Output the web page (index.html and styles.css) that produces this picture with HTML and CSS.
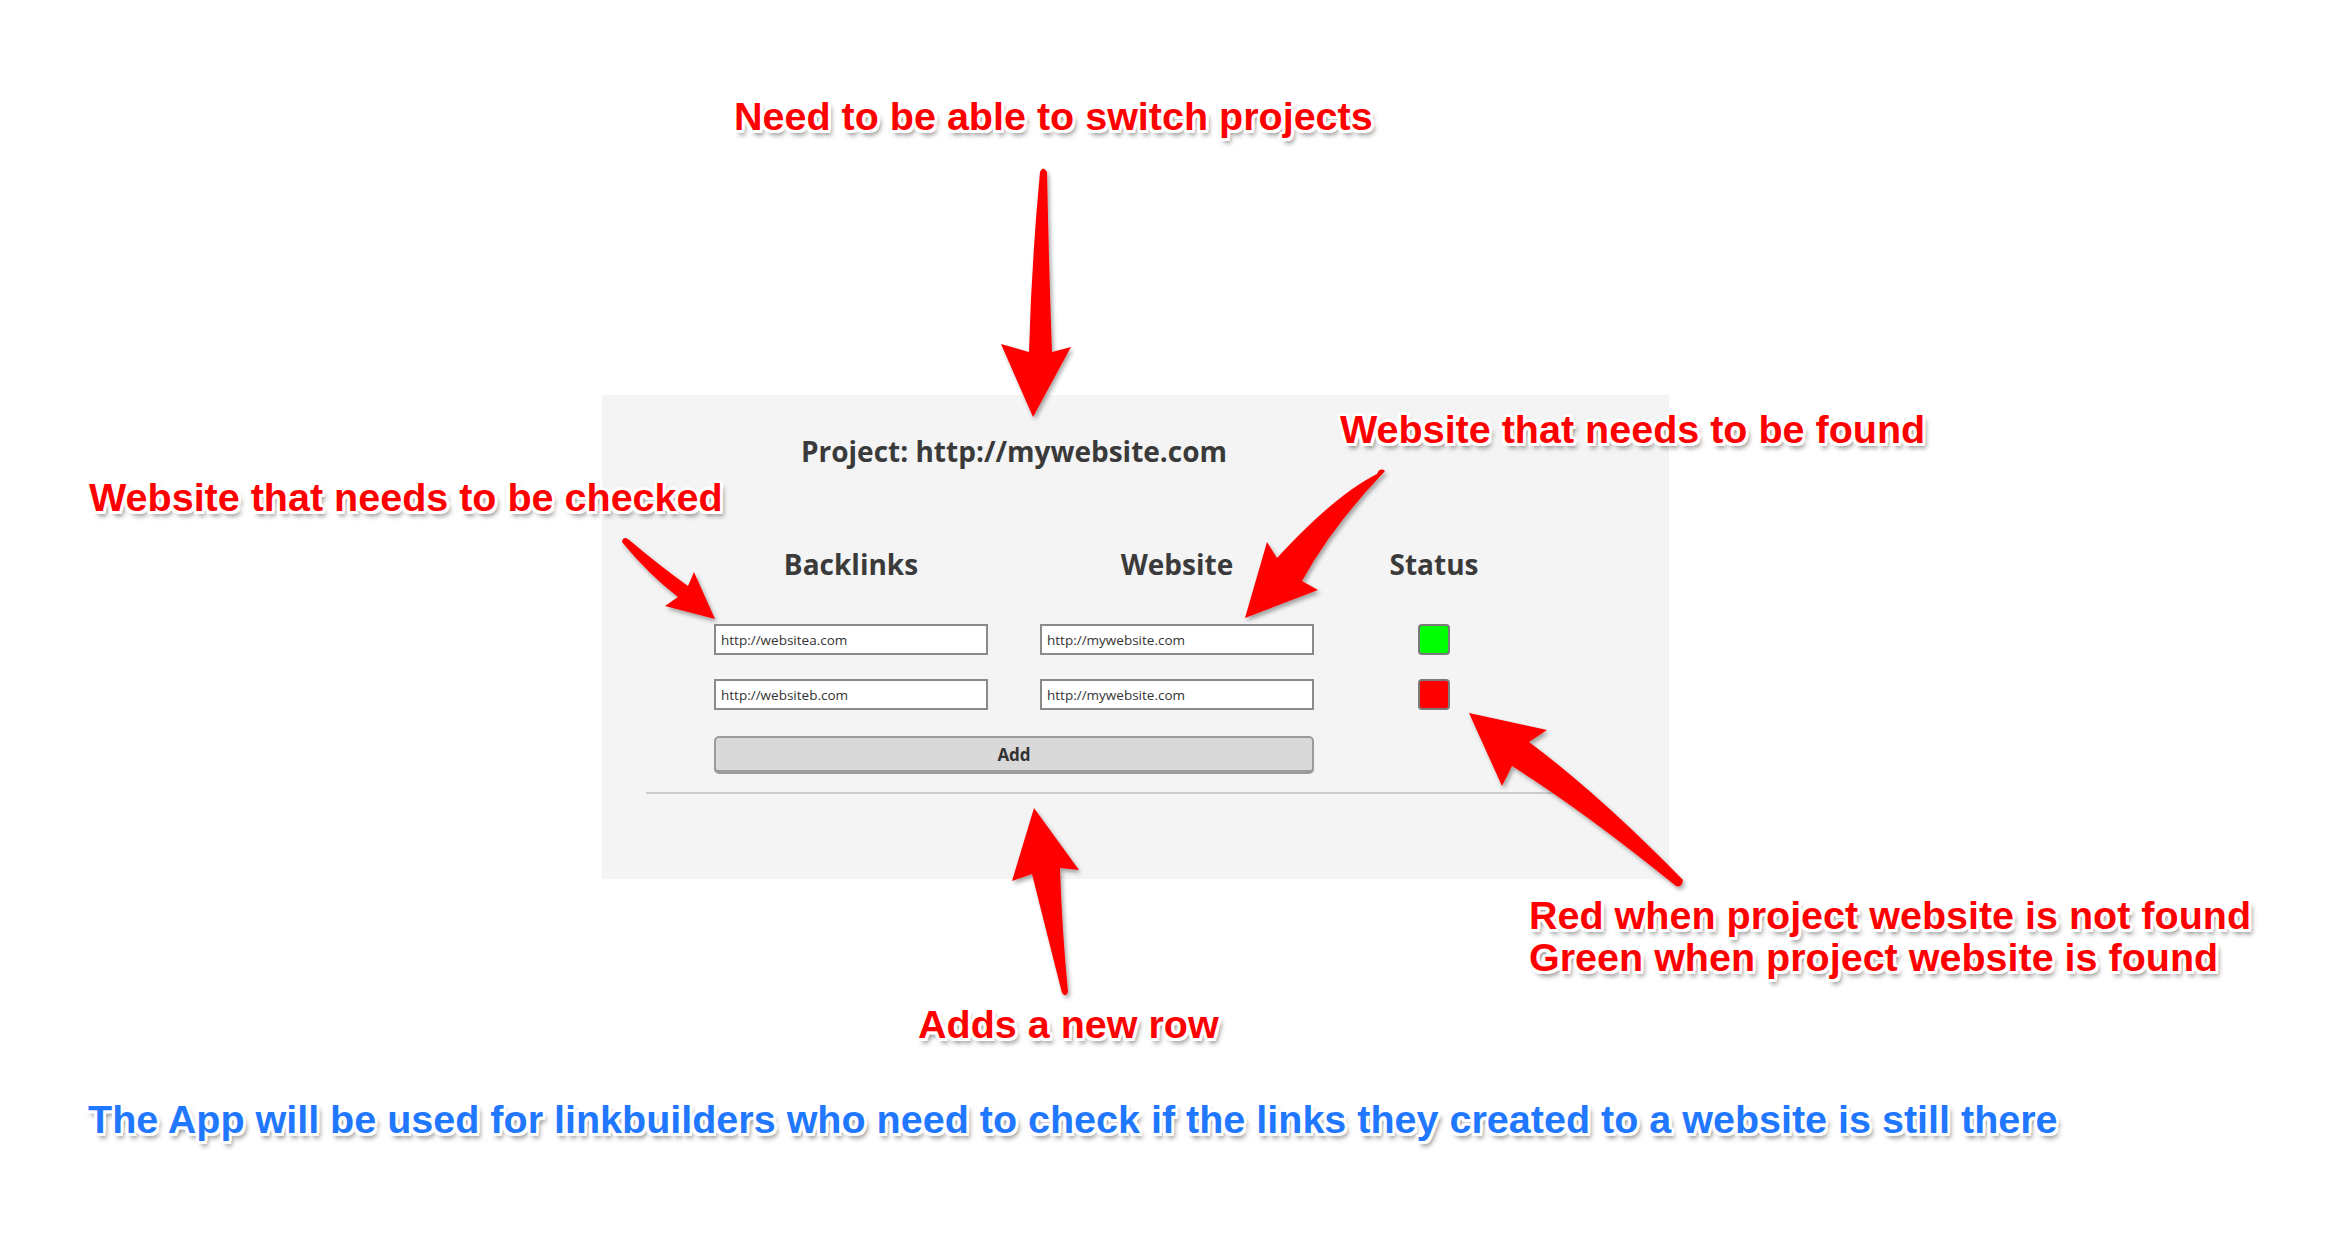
FILE: index.html
```html
<!DOCTYPE html>
<html lang="en">
<head>
<meta charset="utf-8">
<title>Backlink checker mockup</title>
<link rel="stylesheet" href="styles.css">
</head>
<body>
<div class="canvas">
  <section class="panel">
    <h1 class="project-title">Project: http://mywebsite.com</h1>
    <div class="link-table">
      <div class="col-head">Backlinks</div>
      <div class="col-head">Website</div>
      <div class="col-head">Status</div>

      <input class="url-input" type="text" value="http://websitea.com" readonly>
      <input class="url-input" type="text" value="http://mywebsite.com" readonly>
      <div class="status status--found"></div>

      <input class="url-input" type="text" value="http://websiteb.com" readonly>
      <input class="url-input" type="text" value="http://mywebsite.com" readonly>
      <div class="status status--missing"></div>

      <button class="add-btn" type="button">Add</button>
    </div>
    <div class="divider"></div>
  </section>

  <svg class="arrows" width="2337" height="1235" viewBox="0 0 2337 1235" xmlns="http://www.w3.org/2000/svg">
    <defs>
      <filter id="shadow" x="-20%" y="-20%" width="140%" height="140%">
        <feDropShadow dx="2" dy="3" stdDeviation="2" flood-color="#000" flood-opacity="0.35"/>
      </filter>
    </defs>
    <g fill="#ff0000" filter="url(#shadow)">
      <path d="M1040,172 Q1043,165 1047,172 Q1049,270 1052,352 L1071,347 L1033,417 L1001,344 L1029,352 Q1031.5,262 1040,172 Z"/>
      <path d="M622,542 Q623,536 628,539 Q660,566 688,586 L694,572 L715,619 L665,606 L678,597 Q648,574 622,542 Z"/>
      <path d="M1377,474 Q1380,467 1385,471 Q1333,525 1302,581 L1318,590 L1245,618 L1267,542 L1277,558 Q1335,495 1377,474 Z"/>
      <path d="M1529,742 Q1600,795 1683,880 Q1682,888 1676,886 Q1585,812 1512,766 L1502,786 L1469,713 L1547,730 Z"/>
      <path d="M1034,808 L1079,870 L1060,868 Q1062,930 1068,992 Q1066,998 1062,993 Q1046,930 1032,874 L1012,881 Z"/>
    </g>
  </svg>

  <p class="note note--switch">Need to be able to switch projects</p>
  <p class="note note--found">Website that needs to be found</p>
  <p class="note note--checked">Website that needs to be checked</p>
  <p class="note note--status">Red when project website is not found<br>Green when project website is found</p>
  <p class="note note--add">Adds a new row</p>
  <p class="note note--summary">The App will be used for linkbuilders who need to check if the links they created to a website is still there</p>
</div>
</body>
</html>
```

FILE: styles.css
```css
html, body {
  margin: 0;
  padding: 0;
  background: #ffffff;
}

.canvas {
  position: relative;
  width: 2337px;
  height: 1235px;
  box-sizing: border-box;
  padding: 395px 0 0 602px;
  overflow: hidden;
  font-family: "Open Sans", "Lato", sans-serif;
}

.panel {
  width: 1067px;
  height: 484px;
  box-sizing: border-box;
  padding: 39px 0 0 112px;
  background: #f4f4f4;
}

.project-title {
  width: 600px;
  margin: 0;
  font-size: 28px;
  line-height: 34px;
  font-weight: 700;
  color: #3a3a3a;
  text-align: center;
}

.link-table {
  display: grid;
  grid-template-columns: 274px 274px 136px;
  column-gap: 52px;
  row-gap: 24px;
  margin-top: 80px;
}

.col-head {
  font-size: 28px;
  line-height: 32px;
  font-weight: 700;
  color: #3a3a3a;
  text-align: center;
  margin-bottom: 20px;
}

.url-input {
  width: 274px;
  height: 31px;
  box-sizing: border-box;
  margin: 0;
  padding: 0 5px;
  border: 2px solid #8a8a8a;
  border-radius: 0;
  background: #ffffff;
  font-family: "Open Sans", "Lato", sans-serif;
  font-size: 13.5px;
  color: #333333;
  outline: none;
}

.status {
  justify-self: center;
  align-self: center;
  width: 32px;
  height: 31px;
  box-sizing: border-box;
  border: 2px solid #7a7a7a;
  border-radius: 4px;
}

.status--found { background: #00ff00; }
.status--missing { background: #ff0000; }

.add-btn {
  grid-column: 1 / 3;
  width: 100%;
  height: 38px;
  margin-top: 2px;
  box-sizing: border-box;
  border: 2px solid #9b9b9b;
  border-bottom-width: 4px;
  border-radius: 5px;
  background: #d9d9d9;
  font-family: "Open Sans", "Lato", sans-serif;
  font-size: 17px;
  font-weight: 700;
  color: #333333;
  padding: 0;
}

.divider {
  width: 909px;
  height: 2px;
  margin: 18px 0 0 -68px;
  background: #cccccc;
}

.arrows {
  position: absolute;
  left: 0;
  top: 0;
  pointer-events: none;
}

.note {
  position: absolute;
  margin: 0;
  font-family: "Liberation Sans", Arial, sans-serif;
  font-weight: 700;
  font-size: 39.5px;
  line-height: 39px;
  color: #ff0000;
  white-space: nowrap;
  text-shadow:
    -2.5px -2.5px 0 #fff, 2.5px -2.5px 0 #fff, -2.5px 2.5px 0 #fff, 2.5px 2.5px 0 #fff,
    0 -3px 0 #fff, 0 3px 0 #fff, -3px 0 0 #fff, 3px 0 0 #fff,
    3px 5px 5px rgba(0, 0, 0, 0.5);
}

.note--switch { left: 734px; top: 97px; }
.note--found { left: 1340px; top: 410px; }
.note--checked { left: 89px; top: 478px; }
.note--status { left: 1529px; top: 894px; line-height: 42px; }
.note--add { left: 918px; top: 1005px; }
.note--summary { left: 88px; top: 1100px; color: #1f78ff; }
```
